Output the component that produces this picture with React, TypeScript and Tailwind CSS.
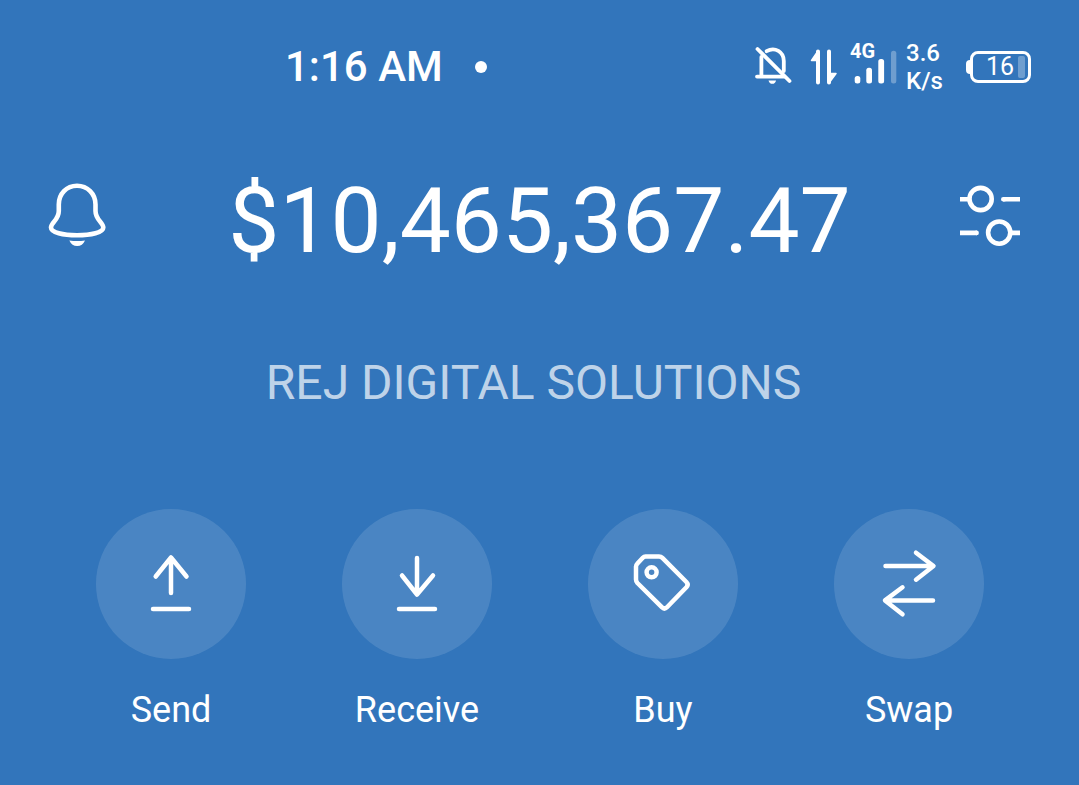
import type { ReactNode } from "react";

interface Action {
  label: string;
  icon: ReactNode;
}

const ACTIONS: Action[] = [
  {
    label: "Send",
    icon: <path d="M75 84V49M59.700 67.500L75 48.500l15.500 19M57 100h36" />,
  },
  {
    label: "Receive",
    icon: <path d="M75 49v36M60 66.5L75 85.5l16-19M57 100h36" />,
  },
  {
    label: "Buy",
    icon: (
      <>
        <path d="M57.5 47.5H71q2 0 3.4 1.4L98.4 73q2.4 2.6 0 5.2L79 98.2q-2.6 2.6-5.2 0L49.4 74Q48 72.4 48 70.4V57.6q0-1.6 1.2-2.8l5.6-6q1.2-1.3 2.700-1.300z" />
        <circle cx="63.6" cy="63.3" r="5" />
      </>
    ),
  },
  {
    label: "Swap",
    icon: <path d="M51.5 57H99M82 43.7L99.5 57 82 70.7M99 91.4H51.5M68.5 78.3L51 91.4l17.5 13.9" />,
  },
];

function StatusBar() {
  return (
    <div className="flex h-[134px] items-center pr-12 pl-[285px]">
      <span className="text-[42px] leading-[48px] font-medium whitespace-nowrap">1:16 AM</span>
      <span className="ml-8 size-3 rounded-full bg-white" />

      <div className="ml-auto flex items-center">
        {/* muted */}
        <svg viewBox="0 2 40 44" className="h-11 w-10" fill="none" stroke="currentColor" strokeWidth="3.8" strokeLinecap="round" strokeLinejoin="round">
          <path d="M3.5 6L35.5 38" />
          <path d="M7.4 14v19.6M3 33.6h27" />
          <path d="M12.6 8.2C21 3.4 29.8 9 29.8 18v10" />
          <path d="M14.5 37.4h7.6q-1 3.4-3.8 3.4t-3.8-3.4z" fill="currentColor" stroke="none" />
        </svg>

        {/* mobile data */}
        <svg viewBox="0 2 28 44" className="ml-4 h-11 w-7" fill="currentColor" stroke="currentColor" strokeLinecap="round" strokeLinejoin="round">
          <path d="M8 8.5v31M19 8.5v31" fill="none" strokeWidth="4" />
          <path d="M8 8v9.5H1.5zM19 40v-9.5h7z" strokeWidth="1.5" />
        </svg>

        <div className="relative ml-3">
          <svg viewBox="0 2 48 44" className="h-11 w-12" fill="currentColor">
            <rect x="4.7" y="33" width="5.6" height="7.5" rx="2.5" />
            <rect x="16.3" y="24.7" width="5.7" height="15.8" rx="2.5" />
            <rect x="28.3" y="16" width="5.8" height="24.5" rx="2.5" />
            <rect x="41" y="7.7" width="5.3" height="32.8" rx="2.5" opacity="0.3" />
          </svg>
          <span className="absolute -top-0.5 left-0 text-xl leading-4 font-bold">4G</span>
        </div>

        <div className="ml-2 w-10 text-2xl leading-7 font-medium">
          <div>3.6</div>
          <div>K/s</div>
        </div>

        <div className="ml-5 flex items-center">
          <span className="h-[14px] w-1 rounded-l-sm bg-white" />
          <div className="flex h-8 w-[61px] items-center justify-end gap-1 rounded-lg border-3 border-white pr-[3px]">
            <span className="text-[25px] leading-7">16</span>
            <span className="h-[22px] w-[7px] rounded-xs bg-white/30" />
          </div>
        </div>
      </div>
    </div>
  );
}

function BellIcon() {
  return (
    <svg viewBox="0 0 72 80" className="h-20 w-18" fill="none" stroke="currentColor" strokeWidth="4.6">
      <path d="M29 10.8C18.5 10.8 10.8 18.8 10.8 29.5V36C10.8 45 3 47.5 3 52.5C3 57.5 15 60.3 29 60.3S55.3 57.5 55.3 52.5C55.3 47.5 47.5 45 47.5 36V29.5C47.5 18.8 39.5 10.8 29 10.8Z" />
      <path d="M21.3 65.5q7.8 1 15.7 0q-2.5 5.6-7.8 5.6t-7.9-5.6z" fill="currentColor" stroke="none" />
    </svg>
  );
}

function SlidersIcon() {
  return (
    <svg viewBox="0 0 72 80" className="h-20 w-18" fill="none" stroke="currentColor" strokeWidth="4.6">
      <circle cx="21.6" cy="24" r="11.1" />
      <circle cx="40.2" cy="57.6" r="11.1" />
      <path d="M1 24.3h9.5M44 24.3h17M1 57.9h17M51.5 57.9H61" />
      <path d="M44.3 24.3h1M17.5 57.9h.1" strokeLinecap="round" />
    </svg>
  );
}

export default function App() {
  return (
    <div className="min-h-screen bg-[#3275bb] font-['Roboto',sans-serif] text-white">
      <StatusBar />

      <main>
        <header className="mt-[41px] flex items-start justify-between px-12">
          <button type="button" aria-label="Notifications">
            <BellIcon />
          </button>
          <h1 className="text-[91px] leading-[92px]">$10,465,367.47</h1>
          <button type="button" aria-label="Manage tokens">
            <SlidersIcon />
          </button>
        </header>

        <p className="mt-[84px] pr-3 text-center text-5xl leading-16 text-white/70">
          REJ DIGITAL SOLUTIONS
        </p>

        <nav className="mt-[94px] flex justify-between pr-[95px] pb-12 pl-24">
          {ACTIONS.map((action) => (
            <button key={action.label} type="button" className="flex w-[150px] flex-col items-center">
              <span className="rounded-full bg-white/12">
                <svg viewBox="0 0 150 150" className="size-[150px]" fill="none" stroke="currentColor" strokeWidth="4.5" strokeLinecap="round" strokeLinejoin="round">
                  {action.icon}
                </svg>
              </span>
              <span className="mt-7 text-4xl leading-[46px]">{action.label}</span>
            </button>
          ))}
        </nav>
      </main>
    </div>
  );
}
